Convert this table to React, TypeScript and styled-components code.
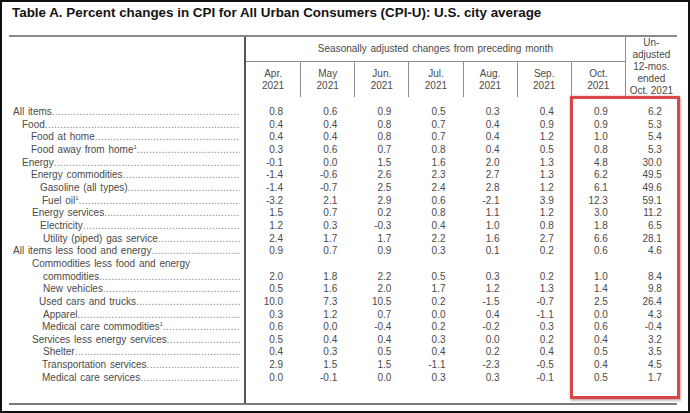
import React from "react";
import styled, { createGlobalStyle } from "styled-components";

const GlobalStyle = createGlobalStyle`
  html, body {
    margin: 0;
    padding: 0;
    background: #ffffff;
  }
  body {
    font-family: "Liberation Sans", Arial, sans-serif;
  }
`;

const Frame = styled.div`
  position: relative;
  width: 690px;
  height: 413px;
  box-sizing: border-box;
  border: 2px solid #111;
  background: #fff;
  overflow: hidden;
`;

const Title = styled.h1`
  margin: 0;
  padding: 3px 0 0 10px;
  font-size: 13.4px;
  line-height: 16px;
  font-weight: bold;
  color: #141414;
  white-space: nowrap;
`;

const Table = styled.div`
  position: relative;
  margin: 14px 0 0 7px;
  width: 668px;
  display: grid;
  grid-template-columns: 237px repeat(7, 54.14px) 52px;
  border-top: 2px solid #8a8a8a;
  border-bottom: 2px solid #7a7a7a;
  color: #4a4a4a;
  font-size: 10px;
`;

const HeadCell = styled.div<{ $span?: number; $rows?: number; $left?: boolean; $bottom?: boolean }>`
  grid-column: span ${(p) => p.$span ?? 1};
  grid-row: span ${(p) => p.$rows ?? 1};
  display: flex;
  align-items: center;
  justify-content: center;
  text-align: center;
  line-height: 12px;
  border-left: ${(p) => (p.$left ? "1px solid #8c8c8c" : "none")};
  border-bottom: ${(p) => (p.$bottom ? "1px solid #8c8c8c" : "none")};
  color: #4a4a4a;
`;

const StubHead = styled.div`
  grid-row: span 2;
  border-right: 2px solid #555;
`;

const SeasonalHead = styled(HeadCell)`
  height: 24px;
  word-spacing: 1px;
`;

const MonthHead = styled(HeadCell)`
  height: 35px;
`;

const Spacer = styled.div<{ $h: number }>`
  height: ${(p) => p.$h}px;
`;

const StubSpacer = styled(Spacer)`
  border-right: 2px solid #555;
`;

const FillSpacer = styled(Spacer)`
  grid-column: span 8;
`;

const Stub = styled.div<{ $indent: number }>`
  display: flex;
  min-width: 0;
  height: 12.67px;
  line-height: 12.67px;
  padding-left: ${(p) => p.$indent}px;
  padding-right: 4px;
  border-right: 2px solid #555;
  overflow: hidden;
  white-space: nowrap;
  word-spacing: 1px;
`;

const Label = styled.span`
  flex: none;
`;

const Leader = styled.span`
  display: block;
  flex: 1 1 0;
  min-width: 0;
  overflow: hidden;
  color: #7c7c7c;
  letter-spacing: 0.3px;
  word-spacing: 0;
`;

const Note = styled.sup`
  font-size: 6px;
  line-height: 0;
  vertical-align: 4px;
`;

const Num = styled.div<{ $pad: number }>`
  height: 12.67px;
  line-height: 12.67px;
  text-align: right;
  padding-right: ${(p) => p.$pad}px;
`;

const Highlight = styled.div`
  position: absolute;
  left: 561px;
  top: 59px;
  width: 110px;
  height: 303px;
  box-sizing: border-box;
  border: 3px solid #d9474b;
  box-shadow: 0 0 2px rgba(216, 56, 60, 0.5), 1px 2px 2px rgba(0, 0, 0, 0.22);
  pointer-events: none;
`;

type Row = { label: string; note?: boolean; indent: number; leader?: boolean; v?: string[] };

const rows: Row[] = [
  { label: "All items", indent: 4, v: ["0.8", "0.6", "0.9", "0.5", "0.3", "0.4", "0.9", "6.2"] },
  { label: "Food", indent: 13, v: ["0.4", "0.4", "0.8", "0.7", "0.4", "0.9", "0.9", "5.3"] },
  { label: "Food at home", indent: 22, v: ["0.4", "0.4", "0.8", "0.7", "0.4", "1.2", "1.0", "5.4"] },
  { label: "Food away from home", note: true, indent: 22, v: ["0.3", "0.6", "0.7", "0.8", "0.4", "0.5", "0.8", "5.3"] },
  { label: "Energy", indent: 13, v: ["-0.1", "0.0", "1.5", "1.6", "2.0", "1.3", "4.8", "30.0"] },
  { label: "Energy commodities", indent: 22, v: ["-1.4", "-0.6", "2.6", "2.3", "2.7", "1.3", "6.2", "49.5"] },
  { label: "Gasoline  (all types)", indent: 31, v: ["-1.4", "-0.7", "2.5", "2.4", "2.8", "1.2", "6.1", "49.6"] },
  { label: "Fuel oil", note: true, indent: 33, v: ["-3.2", "2.1", "2.9", "0.6", "-2.1", "3.9", "12.3", "59.1"] },
  { label: "Energy services", indent: 23, v: ["1.5", "0.7", "0.2", "0.8", "1.1", "1.2", "3.0", "11.2"] },
  { label: "Electricity", indent: 31, v: ["1.2", "0.3", "-0.3", "0.4", "1.0", "0.8", "1.8", "6.5"] },
  { label: "Utility  (piped)  gas service", indent: 34, v: ["2.4", "1.7", "1.7", "2.2", "1.6", "2.7", "6.6", "28.1"] },
  { label: "All items less food and energy", indent: 4, v: ["0.9", "0.7", "0.9", "0.3", "0.1", "0.2", "0.6", "4.6"] },
  { label: "Commodities less food and energy", indent: 23, leader: false },
  { label: "commodities", indent: 34, v: ["2.0", "1.8", "2.2", "0.5", "0.3", "0.2", "1.0", "8.4"] },
  { label: "New vehicles", indent: 34, v: ["0.5", "1.6", "2.0", "1.7", "1.2", "1.3", "1.4", "9.8"] },
  { label: "Used  cars and trucks", indent: 30, v: ["10.0", "7.3", "10.5", "0.2", "-1.5", "-0.7", "2.5", "26.4"] },
  { label: "Apparel", indent: 34, v: ["0.3", "1.2", "0.7", "0.0", "0.4", "-1.1", "0.0", "4.3"] },
  { label: "Medical care commodities", note: true, indent: 33, v: ["0.6", "0.0", "-0.4", "0.2", "-0.2", "0.3", "0.6", "-0.4"] },
  { label: "Services less energy services", indent: 23, v: ["0.5", "0.4", "0.4", "0.3", "0.0", "0.2", "0.4", "3.2"] },
  { label: "Shelter", indent: 34, v: ["0.4", "0.3", "0.5", "0.4", "0.2", "0.4", "0.5", "3.5"] },
  { label: "Transportation  services", indent: 33, v: ["2.9", "1.5", "1.5", "-1.1", "-2.3", "-0.5", "0.4", "4.5"] },
  { label: "Medical care services", indent: 33, v: ["0.0", "-0.1", "0.0", "0.3", "0.3", "-0.1", "0.5", "1.7"] },
];

const months = ["Apr.", "May", "Jun.", "Jul.", "Aug.", "Sep.", "Oct."];
const dots = ".".repeat(90);

export default function App() {
  return (
    <>
      <GlobalStyle />
      <Frame>
        <Title>Table A. Percent changes in CPI for All Urban Consumers (CPI-U): U.S. city average</Title>
        <Table>
          <StubHead />
          <SeasonalHead $span={7} $bottom>
            Seasonally adjusted changes from preceding month
          </SeasonalHead>
          <HeadCell $rows={2} $left>
            Un-
            <br />
            adjusted
            <br />
            12-mos.
            <br />
            ended
            <br />
            Oct. 2021
          </HeadCell>
          {months.map((m, i) => (
            <MonthHead key={m} $left={i > 0}>
              {m}
              <br />
              2021
            </MonthHead>
          ))}

          <StubSpacer $h={9} />
          <FillSpacer $h={9} />

          {rows.map((r) => (
            <React.Fragment key={r.label}>
              <Stub $indent={r.indent}>
                <Label>
                  {r.label}
                  {r.note && <Note>1</Note>}
                </Label>
                {r.leader !== false && <Leader>{dots}</Leader>}
              </Stub>
              {Array.from({ length: 8 }).map((_, i) => (
                <Num key={i} $pad={i === 7 ? 15 : 17}>
                  {r.v ? r.v[i] : ""}
                </Num>
              ))}
            </React.Fragment>
          ))}

          <StubSpacer $h={19} />
          <FillSpacer $h={19} />
          <Highlight />
        </Table>
      </Frame>
    </>
  );
}
